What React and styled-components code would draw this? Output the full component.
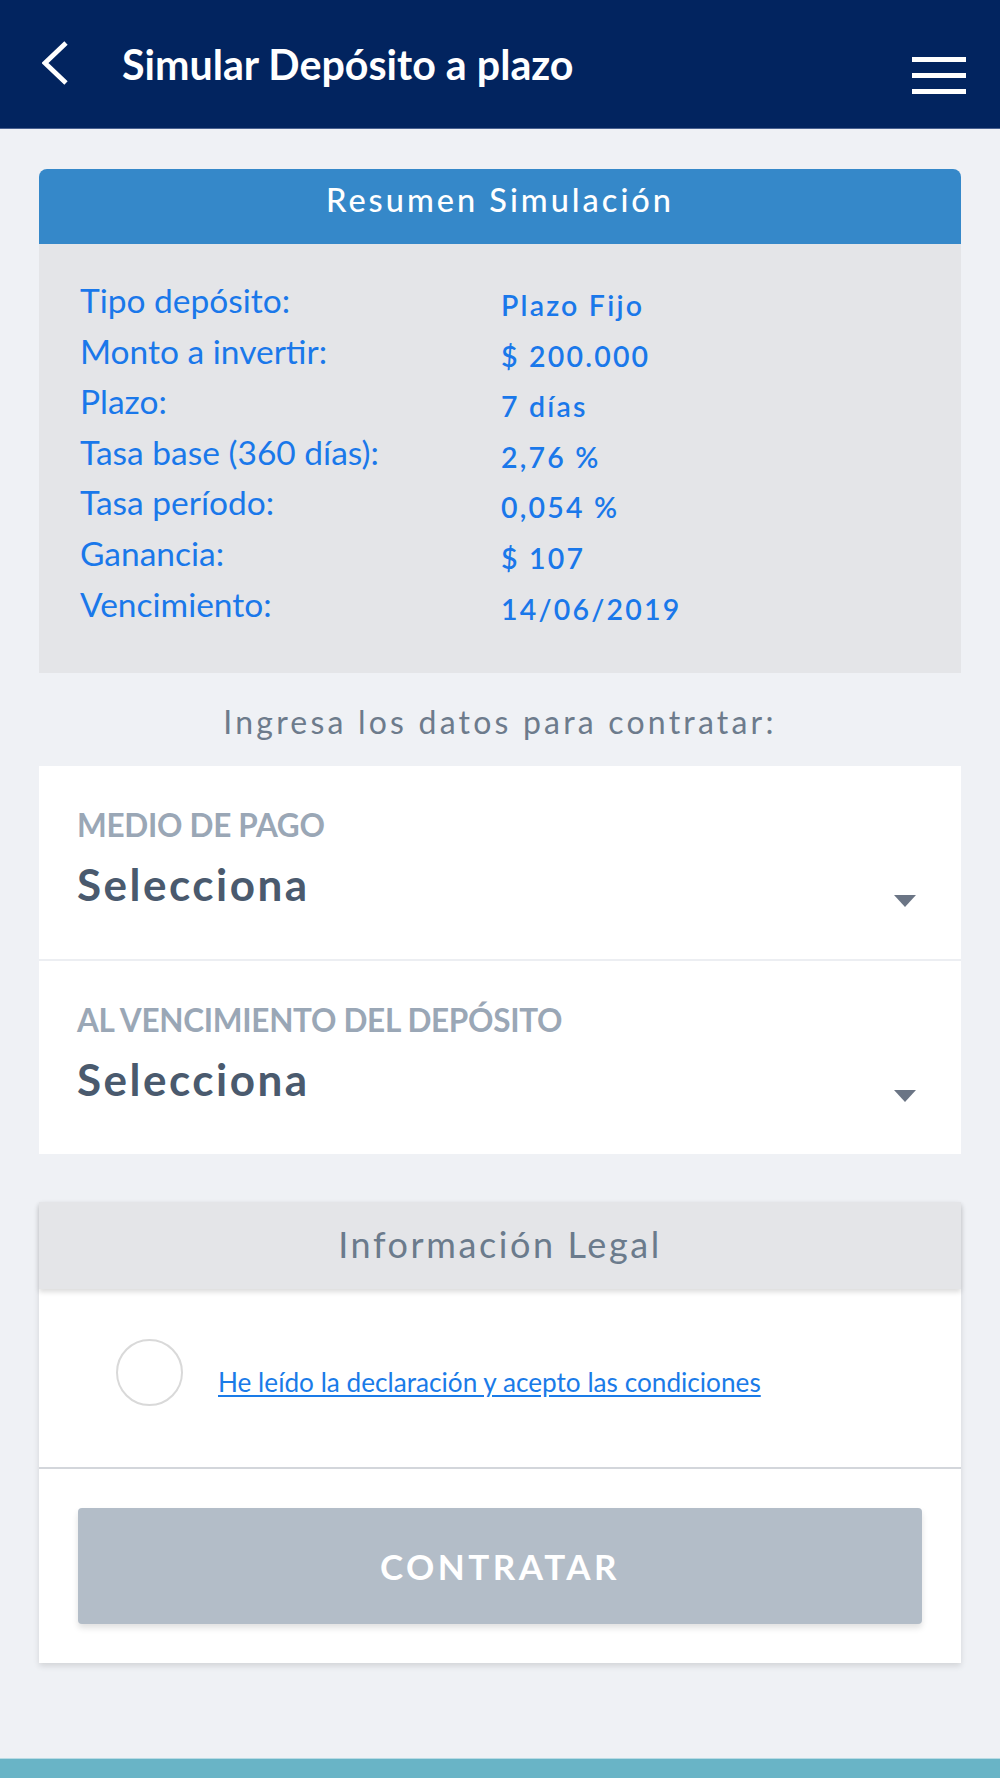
import React from "react";
import styled, { createGlobalStyle } from "styled-components";

const GlobalStyle = createGlobalStyle`
  html, body { margin: 0; padding: 0; }
  body {
    background: #eff1f5;
    font-family: Lato, "Open Sans", "Liberation Sans", sans-serif;
  }
  * { box-sizing: border-box; }
`;

const Page = styled.div`
  min-height: 100vh;
  display: flex;
  flex-direction: column;
`;

const TopBar = styled.header`
  height: 129px;
  background: #02245f;
  border-bottom: 1px solid #4a6190;
  display: flex;
  align-items: center;
  padding: 0 34px 0 42px;
`;

const BackButton = styled.button`
  background: none;
  border: none;
  padding: 0;
  width: 28px;
  height: 46px;
  display: flex;
  margin-top: -2px;
  cursor: pointer;
`;

const Title = styled.h1`
  margin: 0 0 0 52px;
  flex: 1;
  color: #ffffff;
  font-size: 41.2px;
  font-weight: 700;
  letter-spacing: 0;
`;

const Burger = styled.div`
  width: 54px;
  display: flex;
  flex-direction: column;
  gap: 11px;
  margin-top: 22px;
`;

const BurgerBar = styled.span`
  display: block;
  height: 5px;
  background: #ffffff;
`;

const Main = styled.main`
  padding: 40px 39px 0;
  display: flex;
  flex-direction: column;
`;

const SummaryCard = styled.section`
  border-radius: 8px 8px 0 0;
  overflow: hidden;
`;

const SummaryHead = styled.div`
  height: 75px;
  background: #3588c9;
  color: #ffffff;
  font-size: 32.5px;
  font-weight: 500;
  letter-spacing: 3px;
  text-align: center;
  line-height: 62px;
`;

const SummaryBody = styled.div`
  background: #e4e5e8;
  padding: 31px 41px 44px;
  display: grid;
  grid-template-columns: 1fr 1fr;
  grid-auto-rows: 50.6px;
  align-items: start;
`;

const SumLabel = styled.span`
  color: #1a78ea;
  font-size: 33.5px;
  line-height: 50.6px;
`;

const SumValue = styled.span`
  color: #1a78ea;
  font-size: 28.5px;
  font-weight: 600;
  letter-spacing: 2.2px;
  line-height: 50.6px;
  padding: 5px 0 0 1px;
`;

const Subtitle = styled.p`
  margin: 0;
  padding: 32px 0 27px;
  text-align: center;
  color: #6d7b8c;
  font-size: 32px;
  line-height: 34px;
  letter-spacing: 3.2px;
`;

const FormCard = styled.section`
  background: #ffffff;
  display: flex;
  flex-direction: column;
`;

const Field = styled.div`
  display: grid;
  grid-template-columns: 1fr auto;
  padding: 44px 45px 54px 38px;
  border-top: ${(p) => (p.$first ? "none" : "2px solid #eceef2")};
`;

const FieldLabel = styled.span`
  grid-column: 1 / -1;
  color: #9aa7b6;
  font-size: 31.5px;
  font-weight: 700;
  line-height: 30px;
  letter-spacing: -0.3px;
  margin-bottom: 23px;
`;

const FieldValue = styled.span`
  color: #4a5a6e;
  font-size: 44px;
  font-weight: 700;
  line-height: 42px;
  letter-spacing: 2.5px;
`;

const Caret = styled.span`
  align-self: end;
  margin-bottom: -2px;
  width: 0;
  height: 0;
  border-left: 11px solid transparent;
  border-right: 11px solid transparent;
  border-top: 12px solid #6b7585;
`;

const LegalCard = styled.section`
  margin-top: 48px;
  background: #ffffff;
  box-shadow: 0 3px 6px rgba(0, 0, 0, 0.12);
`;

const LegalHead = styled.div`
  height: 87px;
  background: #e4e5e8;
  color: #6b7b8c;
  font-size: 36px;
  letter-spacing: 2.6px;
  line-height: 85px;
  text-align: center;
  position: relative;
  box-shadow: 0 3px 5px rgba(0, 0, 0, 0.14);
`;

const LegalBody = styled.div`
  display: flex;
  align-items: flex-start;
  padding: 50px 40px 61px 77px;
  border-bottom: 2px solid #d3d6db;
`;

const Radio = styled.span`
  flex: none;
  width: 67px;
  height: 67px;
  border-radius: 50%;
  border: 2px solid #d9d9d9;
`;

const LegalLink = styled.a`
  margin: 28px 0 0 35px;
  color: #1a7be8;
  font-size: 26.2px;
  line-height: 30px;
  text-decoration: underline;
  text-underline-offset: 3px;
`;

const ButtonArea = styled.div`
  padding: 39px;
`;

const SubmitButton = styled.button`
  width: 100%;
  height: 116px;
  border: none;
  border-radius: 4px;
  background: #b3bdc8;
  color: #ffffff;
  font-family: inherit;
  font-size: 35px;
  font-weight: 700;
  letter-spacing: 3.5px;
  box-shadow: 0 4px 6px rgba(0, 0, 0, 0.12);
`;

const Footer = styled.footer`
  margin-top: auto;
  height: 20px;
  background: #69b4c6;
  border-top: 1px solid #b8dbe4;
`;

const rows = [
  ["Tipo depósito:", "Plazo Fijo"],
  ["Monto a invertir:", "$ 200.000"],
  ["Plazo:", "7 días"],
  ["Tasa base (360 días):", "2,76 %"],
  ["Tasa período:", "0,054 %"],
  ["Ganancia:", "$ 107"],
  ["Vencimiento:", "14/06/2019"],
];

export default function App() {
  return (
    <Page>
      <GlobalStyle />
      <TopBar>
        <BackButton aria-label="Volver">
          <svg width="28" height="46" viewBox="0 0 28 46">
            <polyline
              points="24,3 3,23 24,43"
              fill="none"
              stroke="#ffffff"
              strokeWidth="4.8"
            />
          </svg>
        </BackButton>
        <Title>Simular Depósito a plazo</Title>
        <Burger>
          <BurgerBar />
          <BurgerBar />
          <BurgerBar />
        </Burger>
      </TopBar>
      <Main>
        <SummaryCard>
          <SummaryHead>Resumen Simulación</SummaryHead>
          <SummaryBody>
            {rows.map(([l, v]) => (
              <React.Fragment key={l}>
                <SumLabel>{l}</SumLabel>
                <SumValue>{v}</SumValue>
              </React.Fragment>
            ))}
          </SummaryBody>
        </SummaryCard>
        <Subtitle>Ingresa los datos para contratar:</Subtitle>
        <FormCard>
          <Field $first>
            <FieldLabel>MEDIO DE PAGO</FieldLabel>
            <FieldValue>Selecciona</FieldValue>
            <Caret />
          </Field>
          <Field>
            <FieldLabel>AL VENCIMIENTO DEL DEPÓSITO</FieldLabel>
            <FieldValue>Selecciona</FieldValue>
            <Caret />
          </Field>
        </FormCard>
        <LegalCard>
          <LegalHead>Información Legal</LegalHead>
          <LegalBody>
            <Radio />
            <LegalLink href="#">He leído la declaración y acepto las condiciones</LegalLink>
          </LegalBody>
          <ButtonArea>
            <SubmitButton>CONTRATAR</SubmitButton>
          </ButtonArea>
        </LegalCard>
      </Main>
      <Footer />
    </Page>
  );
}
